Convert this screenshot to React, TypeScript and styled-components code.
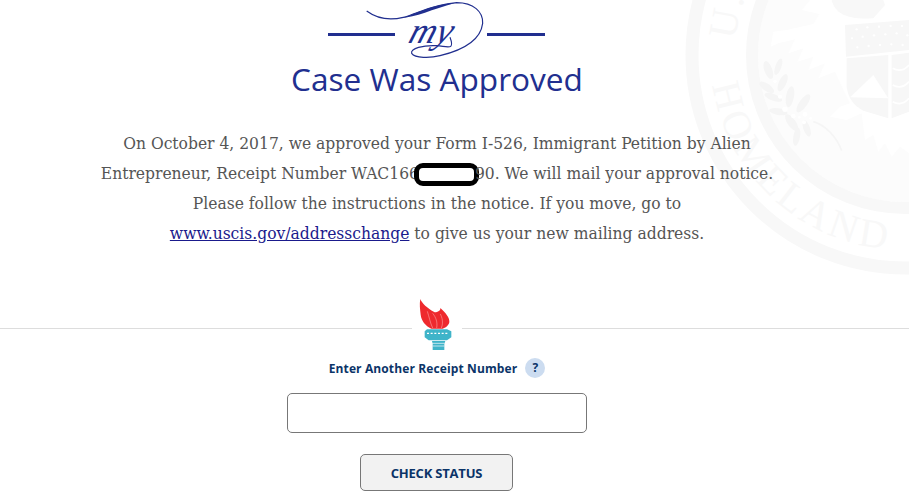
import React from 'react';
import styled, { createGlobalStyle } from 'styled-components';

const Global = createGlobalStyle`
  html, body { margin: 0; padding: 0; background: #fff; height: 100%; overflow: hidden; }
`;

const Page = styled.main`
  position: relative;
  width: 909px;
  height: 502px;
  overflow: hidden;
  background: #fff;
  display: flex;
  flex-direction: column;
`;

const Seal = styled.svg`
  position: absolute;
  left: 660px;
  top: -190px;
  width: 490px;
  height: 490px;
`;

const Content = styled.section`
  position: relative;
  width: 874px;
  display: flex;
  flex-direction: column;
  align-items: center;
`;

const Flourish = styled.svg`
  display: block;
  width: 218px;
  height: 60px;
`;

const Title = styled.h1`
  margin: 0;
  font-family: "Open Sans", sans-serif;
  font-weight: 400;
  font-size: 31.6px;
  line-height: 38px;
  color: #212f8f;
`;

const Message = styled.p`
  margin: 30px 0 0;
  font-family: "DejaVu Serif", serif;
  font-stretch: condensed;
  font-size: 17.3px;
  line-height: 30px;
  color: #555;
  text-align: center;
  white-space: nowrap;
  a { color: #1a1a8c; }
`;

const Redacted = styled.span`
  box-sizing: border-box;
  display: inline-block;
  width: 65px;
  height: 23px;
  margin: -4px -4px -4px -5px;
  vertical-align: -3px;
  background: #fff;
  border: 5px solid #000;
  border-radius: 9px;
`;

const Divider = styled.div`
  position: relative;
  height: 1px;
  background: #ddd;
  margin-top: 80px;
  display: flex;
  justify-content: center;
  padding-right: 35px;
`;

const TorchBadge = styled.div`
  position: absolute;
  top: -34px;
  width: 50px;
  height: 60px;
  background: #fff;
`;

const Form = styled.form`
  width: 874px;
  margin-top: 29px;
  display: flex;
  flex-direction: column;
  align-items: center;
`;

const LabelRow = styled.div`
  display: flex;
  align-items: center;
  gap: 8px;
  height: 20px;
`;

const Label = styled.label`
  font-family: "Open Sans", sans-serif;
  font-weight: 700;
  font-size: 12px;
  letter-spacing: 0.12px;
  color: #0b3468;
`;

const Help = styled.span`
  width: 20px;
  height: 20px;
  border-radius: 50%;
  background: #ccdcf0;
  color: #0b3468;
  font-family: "Open Sans", sans-serif;
  font-weight: 700;
  font-size: 12px;
  line-height: 20px;
  text-align: center;
`;

const ReceiptInput = styled.input`
  box-sizing: border-box;
  display: block;
  width: 300px;
  height: 40px;
  margin-top: 15px;
  background: #fff;
  border: 1px solid #777;
  border-radius: 5px;
`;

const Submit = styled.button`
  box-sizing: border-box;
  width: 153px;
  height: 37px;
  margin: 21px 1px 0 0;
  background: #f2f2f2;
  border: 1px solid #777;
  border-radius: 5px;
  font-family: "Open Sans", sans-serif;
  font-weight: 700;
  font-size: 13px;
  letter-spacing: -0.2px;
  color: #0b3468;
`;

const leaves = [
  [55, 210, 12, 28, -20], [85, 200, 9, 26, 20], [50, 262, 11, 26, -55], [98, 248, 11, 28, 25],
  [70, 292, 10, 28, -70], [120, 290, 12, 32, 10], [160, 310, 12, 32, 35], [85, 335, 10, 28, -80],
  [125, 368, 12, 30, -35], [140, 410, 10, 28, 10], [170, 385, 10, 26, -20],
];

const dots = [
  [75, 244, 5], [90, 290, 6], [105, 328, 8], [130, 348, 7], [148, 352, 4], [165, 343, 7], [162, 367, 6], [182, 355, 4],
];

const stars = [
  [320, 88], [352, 82], [387, 80], [422, 78], [456, 78], [306, 115], [338, 110], [372, 106], [406, 103], [440, 100],
  [472, 106], [322, 142], [356, 138], [390, 135], [424, 133], [458, 135],
];

function App() {
  return (
    <Page>
      <Global />
      <Seal viewBox="0 0 490 490" aria-hidden="true">
        <defs>
          <path id="sealBottom" d="M 50 245 A 195 195 0 0 0 440 245" />
          <path id="sealTop" d="M 75 245 A 170 170 0 0 1 415 245" />
        </defs>
        <circle cx="245" cy="245" r="147" fill="#fcfcfc" />
        <circle cx="245" cy="245" r="213" fill="none" stroke="#f8f8f8" strokeWidth="13" />
        <circle cx="245" cy="245" r="153" fill="none" stroke="#f8f8f8" strokeWidth="12" />
        <text fontFamily="Liberation Serif, serif" fontSize="40" fill="#f8f8f8" letterSpacing="4">
          <textPath href="#sealBottom" startOffset="30">HOMELAND</textPath>
        </text>
        <text fontFamily="Liberation Serif, serif" fontSize="40" fill="#f8f8f8" letterSpacing="4">
          <textPath href="#sealTop" startOffset="15">U.</textPath>
        </text>
        <g transform="translate(90 190) scale(0.3333)">
          <path
            d="M 180 0 L 155 30 L 208 42 L 190 72 L 110 90 L 70 95 L 62 140 L 85 130 L 135 118 L 115 160 L 160 145 L 142 185 L 190 170 L 175 210 L 225 190 L 205 235 L 255 215 L 290 290 L 300 310 L 270 320 L 240 350 L 290 360 L 335 340 L 345 420 L 370 405 L 385 455 L 405 430 L 425 470 L 450 440 L 477 460 L 477 0 Z"
            fill="#fff"
          />
          <path d="M 245 0 C 255 40 290 60 370 55 L 405 15 L 400 0 Z" fill="#f8f8f8" />
          <path d="M 285 75 L 477 60 L 477 150 L 288 170 Z" fill="#f7f7f7" />
          <path d="M 290 175 L 415 165 L 415 355 L 340 332 C 310 315 295 295 290 260 Z" fill="#f7f7f7" />
          <path d="M 300 292 L 370 225 L 415 295 Z" fill="#fff" />
          <path d="M 425 165 L 477 158 L 477 335 L 425 355 Z" fill="#f7f7f7" />
          <path d="M 428 205 Q 455 220 477 195 M 428 255 Q 455 270 477 245 M 428 305 Q 455 320 477 295" fill="none" stroke="#fff" strokeWidth="5" />
          {stars.map(([x, y]) => (
            <circle key={`${x}-${y}`} cx={x} cy={y} r="3.5" fill="#fff" />
          ))}
          {leaves.map(([x, y, rx, ry, a]) => (
            <ellipse key={`${x}-${y}`} cx={x} cy={y} rx={rx} ry={ry} fill="#f5f5f5" transform={`rotate(${a} ${x} ${y})`} />
          ))}
          {dots.map(([x, y, r]) => (
            <circle key={`${x}-${y}`} cx={x} cy={y} r={r} fill="#fff" />
          ))}
          <path d="M 190 365 C 225 375 260 410 275 452" fill="none" stroke="#f5f5f5" strokeWidth="5" />
        </g>
      </Seal>
      <Content>
        <Flourish viewBox="0 0 218 60" aria-label="my">
          <rect x="0" y="33" width="67" height="3" fill="#212f8f" />
          <rect x="159" y="33" width="58" height="3" fill="#212f8f" />
          <g transform="translate(32 0) scale(0.3333)">
            <path
              d="M 20 33 C 50 55 90 62 130 52 C 170 42 210 15 290 8 C 340 8 370 35 368 70 C 362 120 310 150 240 167 C 210 175 165 175 155 160 C 150 145 190 135 230 137 C 265 140 285 152 270 112"
              fill="none"
              stroke="#212f8f"
              strokeWidth="3.5"
            />
            <path d="M 120 54 C 160 48 200 16 285 9 C 215 28 170 52 120 54 Z" fill="#212f8f" />
            <text x="118" y="130" fontFamily="Liberation Serif, serif" fontStyle="italic" fontSize="110" fill="#212f8f" transform="skewX(-18) translate(65 0)">my</text>
          </g>
        </Flourish>
        <Title>Case Was Approved</Title>
        <Message>
          On October 4, 2017, we approved your Form I-526, Immigrant Petition by Alien<br />
          Entrepreneur, Receipt Number WAC166<Redacted />90. We will mail your approval notice.<br />
          Please follow the instructions in the notice. If you move, go to<br />
          <a href="#addresschange">www.uscis.gov/addresschange</a> to give us your new mailing address.
        </Message>
      </Content>
      <Divider>
        <TorchBadge>
          <svg width="50" height="60" viewBox="0 0 150 180" aria-hidden="true">
            <path d="M 25 15 C 30 28 45 42 68 55 C 78 54 86 50 85 42 C 100 55 114 72 112 85 C 110 95 100 102 92 104 L 58 104 C 40 95 28 80 26 62 C 24 45 22 30 25 15 Z" fill="#ee2a2e" />
            <path d="M 62 102 C 54 85 52 70 46 52 M 74 102 C 77 85 72 70 62 58 M 88 102 C 95 85 90 70 85 60" fill="none" stroke="#fbb" strokeWidth="1.5" />
            <path d="M 45 106 L 105 106 L 118 112 L 118 130 L 105 139 L 50 139 L 38 130 L 38 112 Z" fill="#3fb4c9" />
            <path d="M 45 118 H 108" stroke="#fff" strokeWidth="3.5" strokeDasharray="6 5" />
            <path d="M 60 141 H 100 L 97 150 V 168 H 62 V 150 Z" fill="#3fb4c9" />
            <path d="M 60 148 H 98 M 62 156 H 97" stroke="#fff" strokeWidth="2" />
          </svg>
        </TorchBadge>
      </Divider>
      <Form>
        <LabelRow>
          <Label htmlFor="receipt">Enter Another Receipt Number</Label>
          <Help>?</Help>
        </LabelRow>
        <ReceiptInput id="receipt" type="text" />
        <Submit type="button">CHECK STATUS</Submit>
      </Form>
    </Page>
  );
}

export default App;
